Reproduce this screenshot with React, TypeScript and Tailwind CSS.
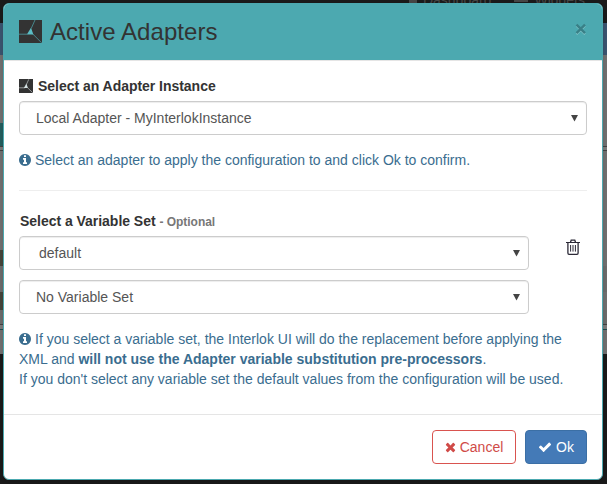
import type { ReactNode } from 'react';

function AdapterLogo({ className }: { className: string }) {
  return (
    <svg viewBox="0 0 23 23" className={className}>
      <rect width="23" height="23" fill="#333" />
      <path d="M16 0L12.2 8.5M0 14.2H8M13.8 14L22.6 22.8" stroke="#4c9aa1" strokeOpacity="0.9" strokeWidth="0.9" fill="none" />
      <path d="M12 7.8L14.4 14.6H7.8Z" fill="#5bbdc5" />
    </svg>
  );
}

function SmallLogo() {
  return (
    <svg viewBox="0 0 14 14" className="size-3.5 shrink-0">
      <rect width="14" height="14" fill="#333" />
      <path d="M9.8 0.3L7.4 5.5M0 8.8H6M8.4 8.6L13.8 13.8" stroke="#c8cccc" strokeOpacity="0.8" strokeWidth="0.8" fill="none" />
      <path d="M7.4 4.6L8.9 9.1H4.9Z" fill="#d5e2e3" />
    </svg>
  );
}

function InfoIcon() {
  return (
    <svg viewBox="128 0 1536 1792" fill="currentColor" className="mr-1 inline-block h-3.5 w-3 align-[-2px]">
      <path d="M1152 1376v-160q0-14-9-23t-23-9h-96v-512q0-14-9-23t-23-9h-320q-14 0-23 9t-9 23v160q0 14 9 23t23 9h96v320h-96q-14 0-23 9t-9 23v160q0 14 9 23t23 9h448q14 0 23-9t9-23zm-128-896v-160q0-14-9-23t-23-9h-192q-14 0-23 9t-9 23v160q0 14 9 23t23 9h192q14 0 23-9t9-23zm640 416q0 209-103 385.5t-279.5 279.5-385.5 103-385.5-103-279.5-279.5-103-385.5 103-385.5 279.5-279.5 385.5-103 385.5 103 279.5 279.5 103 385.5z" />
    </svg>
  );
}

function TimesIcon() {
  return (
    <svg viewBox="192 0 1408 1792" fill="currentColor" className="mr-1 h-3.5 w-[11px]">
      <path d="M1490 1322q0 40-28 68l-136 136q-28 28-68 28t-68-28l-294-294-294 294q-28 28-68 28t-68-28l-136-136q-28-28-28-68t28-68l294-294-294-294q-28-28-28-68t28-68l136-136q28-28 68-28t68 28l294 294 294-294q28-28 68-28t68 28l136 136q28 28 28 68t-28 68l-294 294 294 294q28 28 28 68z" />
    </svg>
  );
}

function CheckIcon() {
  return (
    <svg viewBox="0 0 1792 1792" fill="currentColor" className="mr-1 size-3.5">
      <path d="M1671 566q0 40-28 68l-724 724-136 136q-28 28-68 28t-68-28l-136-136-362-362q-28-28-28-68t28-68l136-136q28-28 68-28t68 28l294 295 656-657q28-28 68-28t68 28l136 136q28 28 28 68z" />
    </svg>
  );
}

function TrashIcon() {
  return (
    <svg viewBox="0 0 14 16" fill="none" stroke="#2b2836" className="h-4 w-3.5">
      <path d="M0 3.5H14" strokeWidth="1.2" />
      <path d="M4.5 3.3L5.2 1.2H8.8L9.5 3.3" strokeWidth="1.3" />
      <path d="M1.9 3.5V14Q1.9 15.3 3 15.3H11Q12.1 15.3 12.1 14V3.5" strokeWidth="1.3" />
      <path d="M4.6 6V12.6M7 6V12.6M9.4 6V12.6" strokeWidth="1" />
    </svg>
  );
}

function Select({ children, className }: { children: ReactNode; className: string }) {
  return (
    <div className={`flex h-[34px] items-center justify-between rounded border border-[#ccc] bg-white pr-2 text-[#555] shadow-[inset_0_1px_1px_rgba(0,0,0,0.075)] ${className}`}>
      <span>{children}</span>
      <svg viewBox="0 0 8 8" className="h-2 w-[7px]" fill="#444"><path d="M0 0.5H8L4 8Z" /></svg>
    </div>
  );
}

function Backdrop() {
  return (
    <div className="absolute inset-0 flex flex-col overflow-hidden bg-[#1b1b1b] text-[#484848]">
      <div className="flex h-[23px] shrink-0 items-start justify-end pr-[22px] text-[14px] leading-[14px]">
        <div className="-mt-[7px] flex items-center gap-1.5">
          <span className="h-2.5 w-2 bg-[#484848]" />
          <span>Dashboard</span>
          <span className="ml-[17px] h-1 w-3.5 bg-[#484848]" />
          <span>Widgets</span>
        </div>
      </div>
      <div className="h-8 shrink-0 bg-[#3d5874]" />
      <div className="h-[68px] shrink-0 bg-[#757575]" />
      <div className="flex h-[23px] shrink-0 justify-between bg-[#757575]">
        <div className="w-[3px] bg-[#256262]" />
      </div>
      <div className="h-[5px] shrink-0 border-y border-[#444] bg-[#808080]" />
      <div className="h-[99px] shrink-0 bg-[#757575]" />
      <div className="flex h-4 shrink-0 bg-[#757575]"><div className="w-[3px] bg-[#48483d]" /></div>
      <div className="h-[26px] shrink-0 bg-[#707070]" />
      <div className="flex h-[18px] shrink-0 bg-[#757575]"><div className="w-[3px] bg-[#48483d]" /></div>
      <div className="h-[14px] shrink-0 bg-[#707070]" />
      <div className="h-[6px] shrink-0 border-t border-b border-t-[#444] border-b-[#204d50] bg-[#808080]" />
      <div className="h-6 shrink-0 bg-[#757575]" />
    </div>
  );
}

export default function App() {
  return (
    <div className="relative h-[484px] w-[607px] overflow-hidden pt-[3px] pl-[3px] font-['Liberation_Sans',Arial,sans-serif] text-[14px] leading-5 text-[#333]">
      <Backdrop />
      <div className="relative flex h-[477px] w-[600px] flex-col overflow-hidden rounded-md border border-[#4ca9b0] bg-white shadow-[0_3px_10px_rgba(0,0,0,0.2)]">
        <header className="flex h-[57px] shrink-0 items-center justify-between border-b border-[#e5e5e5] bg-[#4ca9b0] pr-[15px] pl-[15px]">
          <h4 className="flex items-center gap-[8px] text-[24px] leading-[26px]">
            <AdapterLogo className="mb-0.5 size-[23px]" />
            <span className="tracking-[0.05px]">Active Adapters</span>
          </h4>
          <svg viewBox="0 0 12 12" className="mb-1.5 size-3" fill="none">
            <path d="M1.5 2.8L10 11.3M10 2.8L1.5 11.3" stroke="#82c3c8" strokeWidth="2" />
            <path d="M1.5 1.7L10 10.2M10 1.7L1.5 10.2" stroke="#398087" strokeWidth="2.4" />
          </svg>
        </header>

        <main className="flex h-[353px] shrink-0 flex-col px-[15px] pt-[15px]">
          <div className="flex items-center gap-[5px] font-bold">
            <SmallLogo />
            <span className="tracking-[-0.03px]">Select an Adapter Instance</span>
          </div>
          <Select className="mt-[5px] w-[568px] pl-4">Local Adapter - MyInterlokInstance</Select>
          <p className="mt-[15px] text-[#3a6d8f]"><InfoIcon />Select an adapter to apply the configuration to and click Ok to confirm.</p>
          <hr className="mt-5 w-[568px] border-[#eee]" />
          <div className="mt-5 pl-px font-bold tracking-[-0.03px]">
            Select a Variable Set <span className="text-[12px] text-[#777]">- Optional</span>
          </div>
          <div className="mt-1 flex w-[568px] items-start justify-between">
            <Select className="w-[510px] pl-[19px]">default</Select>
            <button className="mt-[3px] mr-[7px]"><TrashIcon /></button>
          </div>
          <Select className="mt-2.5 w-[510px] pl-4">No Variable Set</Select>
          <p className="mt-[15px] whitespace-nowrap text-[#3a6d8f]">
            <InfoIcon />If you select a variable set, the Interlok UI will do the replacement before applying the<br />
            XML and <b>will not use the Adapter variable substitution pre-processors</b>.<br />
            If you don't select any variable set the default values from the configuration will be used.
          </p>
        </main>

        <footer className="flex grow items-start justify-end gap-[9px] border-t border-[#e5e5e5] pt-[15px] pr-[15px]">
          <button className="flex h-[34px] w-[84px] items-center justify-center rounded border border-[#d9534f] bg-white text-[#d04b48]">
            <TimesIcon />Cancel
          </button>
          <button className="flex h-[34px] w-[62px] items-center justify-center rounded border border-[#3b6fa5] bg-[#447ab7] text-white">
            <CheckIcon />Ok
          </button>
        </footer>
      </div>
    </div>
  );
}
